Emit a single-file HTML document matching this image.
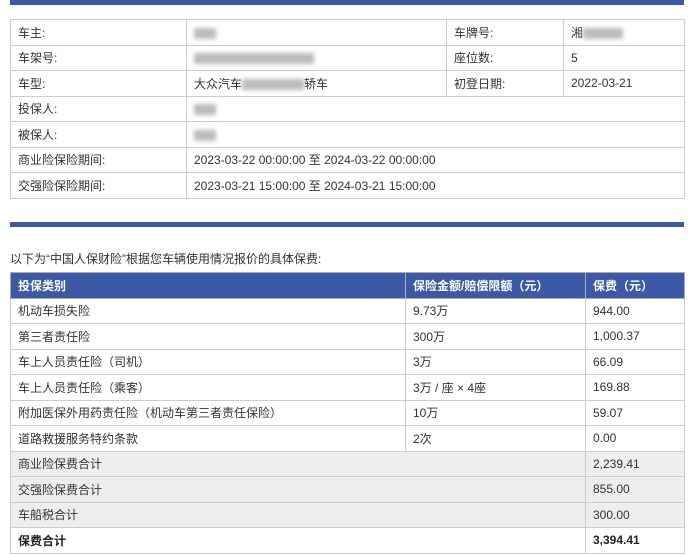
<!DOCTYPE html>
<html><head><meta charset="utf-8"><style>
body{margin:0;background:#fff;font-family:"Liberation Sans","Noto Sans CJK SC",sans-serif;font-size:12px;color:#333;width:688px;height:555px;overflow:hidden;position:relative}
.bar{position:absolute;left:10px;width:674px;height:5px;background:#3c59a6}
table{position:absolute;left:10px;width:674px;border-collapse:collapse;table-layout:fixed}
td,th{border:1px solid #ccc;padding:0 7px;height:24.5px;text-align:left;white-space:nowrap;overflow:hidden}
th{background:#3c59a6;color:#fff;font-weight:bold;border-color:#aab}
.g td{background:#eee}
.b td{font-weight:bold;color:#222}
.blur{display:inline-block;height:11px;background:#bbb;filter:blur(2px);vertical-align:middle}
.note{position:absolute;left:10px;top:250px;font-size:12px;color:#333}
</style></head><body>
<div class="bar" style="top:0"></div>
<table style="top:19px">
<colgroup><col style="width:176px"><col style="width:260px"><col style="width:117px"><col style="width:121px"></colgroup>
<tr><td>车主:</td><td><span class="blur" style="width:22px"></span></td><td>车牌号:</td><td>湘<span class="blur" style="width:40px"></span></td></tr>
<tr><td>车架号:</td><td><span class="blur" style="width:120px"></span></td><td>座位数:</td><td>5</td></tr>
<tr><td>车型:</td><td>大众汽车<span class="blur" style="width:62px"></span>轿车</td><td>初登日期:</td><td>2022-03-21</td></tr>
<tr><td>投保人:</td><td colspan="3"><span class="blur" style="width:22px"></span></td></tr>
<tr><td>被保人:</td><td colspan="3"><span class="blur" style="width:22px"></span></td></tr>
<tr><td>商业险保险期间:</td><td colspan="3">2023-03-22 00:00:00 至 2024-03-22 00:00:00</td></tr>
<tr><td>交强险保险期间:</td><td colspan="3">2023-03-21 15:00:00 至 2024-03-21 15:00:00</td></tr>
</table>
<div class="bar" style="top:222px"></div>
<div class="note">以下为“中国人保财险”根据您车辆使用情况报价的具体保费:</div>
<table style="top:272px">
<colgroup><col style="width:395px"><col style="width:180px"><col style="width:99px"></colgroup>
<tr><th>投保类别</th><th>保险金额/赔偿限额（元）</th><th>保费（元）</th></tr>
<tr><td>机动车损失险</td><td>9.73万</td><td>944.00</td></tr>
<tr><td>第三者责任险</td><td>300万</td><td>1,000.37</td></tr>
<tr><td>车上人员责任险（司机）</td><td>3万</td><td>66.09</td></tr>
<tr><td>车上人员责任险（乘客）</td><td>3万 / 座 × 4座</td><td>169.88</td></tr>
<tr><td>附加医保外用药责任险（机动车第三者责任保险）</td><td>10万</td><td>59.07</td></tr>
<tr><td>道路救援服务特约条款</td><td>2次</td><td>0.00</td></tr>
<tr class="g"><td colspan="2">商业险保费合计</td><td>2,239.41</td></tr>
<tr class="g"><td colspan="2">交强险保费合计</td><td>855.00</td></tr>
<tr class="g"><td colspan="2">车船税合计</td><td>300.00</td></tr>
<tr class="b"><td colspan="2">保费合计</td><td>3,394.41</td></tr>
</table>
</body></html>
